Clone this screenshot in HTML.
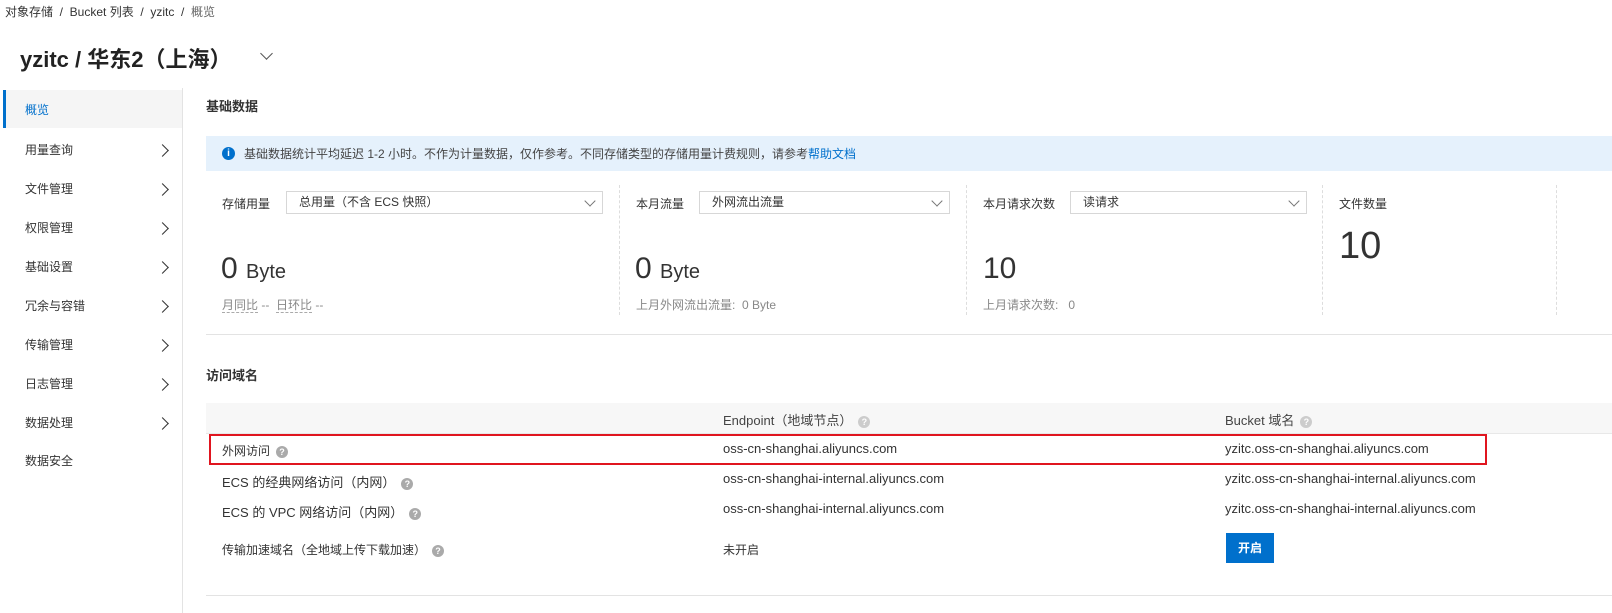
<!DOCTYPE html>
<html><head><meta charset="utf-8"><style>
*{margin:0;padding:0;box-sizing:border-box}
body{width:1612px;height:613px;overflow:hidden;background:#fff;font-family:"Liberation Sans","Noto Sans CJK SC",sans-serif;color:#333;font-size:12px;position:relative}
.a{position:absolute;white-space:nowrap}
.chev{position:absolute;width:9px;height:9px;border-right:1.5px solid #333;border-top:1.5px solid #333;transform:rotate(45deg)}
.sel{position:absolute;height:23px;border:1px solid #d7d7d7;background:#fff;padding-left:12px;line-height:21px;font-size:12px}
.sel:after{content:"";position:absolute;right:8px;top:5px;width:7px;height:7px;border-right:1px solid #777;border-bottom:1px solid #777;transform:rotate(45deg)}
.q{display:inline-block;width:12px;height:12px;border-radius:50%;background:#aaa;color:#fff;font-size:9px;line-height:12px;text-align:center;font-weight:bold;vertical-align:middle;margin-left:6px}
.dash{position:absolute;border-left:1px dashed #ddd;top:185px;height:130px}
</style></head><body>
<div class="a" style="left:5px;top:3px;font-size:12px;color:#333">对象存储 &nbsp;/&nbsp; Bucket 列表 &nbsp;/&nbsp; yzitc &nbsp;/&nbsp; <span style="color:#666">概览</span></div>
<div class="a" style="left:20px;top:42px;font-size:22px;font-weight:bold;color:#222">yzitc / 华东2（上海）</div>
<div class="chev" style="left:262px;top:49px;transform:rotate(135deg);border-color:#555"></div>

<div class="a" style="left:182px;top:88px;width:1px;height:525px;background:#e3e3e3"></div>
<div class="a" style="left:3px;top:90px;width:179px;height:38px;background:#f5f5f5;border-left:3px solid #0070cc"></div>
<div class="a" style="left:25px;top:101px;color:#0070cc">概览</div>
<div class="a" style="left:25px;top:141px">用量查询</div><div class="chev" style="left:158px;top:146px"></div>
<div class="a" style="left:25px;top:180px">文件管理</div><div class="chev" style="left:158px;top:185px"></div>
<div class="a" style="left:25px;top:219px">权限管理</div><div class="chev" style="left:158px;top:224px"></div>
<div class="a" style="left:25px;top:258px">基础设置</div><div class="chev" style="left:158px;top:263px"></div>
<div class="a" style="left:25px;top:297px">冗余与容错</div><div class="chev" style="left:158px;top:302px"></div>
<div class="a" style="left:25px;top:336px">传输管理</div><div class="chev" style="left:158px;top:341px"></div>
<div class="a" style="left:25px;top:375px">日志管理</div><div class="chev" style="left:158px;top:380px"></div>
<div class="a" style="left:25px;top:414px">数据处理</div><div class="chev" style="left:158px;top:419px"></div>
<div class="a" style="left:25px;top:452px">数据安全</div>

<div class="a" style="left:206px;top:96px;font-size:13px;font-weight:bold">基础数据</div>
<div class="a" style="left:206px;top:136px;width:1406px;height:35px;background:#e5f1fc"></div>
<div class="a" style="left:222px;top:147px;width:13px;height:13px;border-radius:50%;background:#0070cc;color:#fff;font-size:10px;font-weight:bold;text-align:center;line-height:13px">i</div>
<div class="a" style="left:244px;top:145px;font-size:12px;color:#444">基础数据统计平均延迟 1-2 小时。不作为计量数据，仅作参考。不同存储类型的存储用量计费规则，请参考<span style="color:#0070cc">帮助文档</span></div>

<div class="a" style="left:222px;top:195px">存储用量</div>
<div class="sel" style="left:286px;top:191px;width:317px">总用量（不含 ECS 快照）</div>
<div class="a" style="left:221px;top:252px;font-size:30px;font-weight:300">0 <span style="font-size:20px">Byte</span></div>
<div class="a" style="left:222px;top:296px;color:#888"><span style="border-bottom:1px dashed #aaa">月同比</span> -- &nbsp;<span style="border-bottom:1px dashed #aaa">日环比</span> --</div>
<div class="dash" style="left:619px"></div>
<div class="a" style="left:636px;top:195px">本月流量</div>
<div class="sel" style="left:699px;top:191px;width:251px">外网流出流量</div>
<div class="a" style="left:635px;top:252px;font-size:30px;font-weight:300">0 <span style="font-size:20px">Byte</span></div>
<div class="a" style="left:636px;top:296px;color:#888">上月外网流出流量: &nbsp;0 Byte</div>
<div class="dash" style="left:966px"></div>
<div class="a" style="left:983px;top:195px">本月请求次数</div>
<div class="sel" style="left:1070px;top:191px;width:237px">读请求</div>
<div class="a" style="left:983px;top:252px;font-size:30px;font-weight:300">10</div>
<div class="a" style="left:983px;top:296px;color:#888">上月请求次数: &nbsp;&nbsp;0</div>
<div class="dash" style="left:1322px"></div>
<div class="a" style="left:1339px;top:195px">文件数量</div>
<div class="a" style="left:1339px;top:225px;font-size:38px;font-weight:300">10</div>
<div class="dash" style="left:1556px"></div>
<div class="a" style="left:206px;top:334px;width:1406px;height:1px;background:#e3e3e3"></div>

<div class="a" style="left:206px;top:365px;font-size:13px;font-weight:bold">访问域名</div>
<div class="a" style="left:206px;top:403px;width:1406px;height:31px;background:#f7f7f7;border-bottom:1px solid #e8e8e8"></div>
<div class="a" style="left:723px;top:410px;color:#444;font-size:13px">Endpoint（地域节点）<span class="q" style="background:#ccc">?</span></div>
<div class="a" style="left:1225px;top:410px;color:#444;font-size:13px">Bucket 域名<span class="q" style="background:#ccc">?</span></div>
<div class="a" style="left:209px;top:434px;width:1278px;height:31px;border:2px solid #e0151f"></div>
<div class="a" style="left:222px;top:442px">外网访问<span class="q">?</span></div>
<div class="a" style="left:723px;top:441px;font-size:13px">oss-cn-shanghai.aliyuncs.com</div>
<div class="a" style="left:1225px;top:441px;font-size:13px">yzitc.oss-cn-shanghai.aliyuncs.com</div>
<div class="a" style="left:222px;top:472px;font-size:13px">ECS 的经典网络访问（内网）<span class="q">?</span></div>
<div class="a" style="left:723px;top:471px;font-size:13px">oss-cn-shanghai-internal.aliyuncs.com</div>
<div class="a" style="left:1225px;top:471px;font-size:13px">yzitc.oss-cn-shanghai-internal.aliyuncs.com</div>
<div class="a" style="left:222px;top:502px;font-size:13px">ECS 的 VPC 网络访问（内网）<span class="q">?</span></div>
<div class="a" style="left:723px;top:501px;font-size:13px">oss-cn-shanghai-internal.aliyuncs.com</div>
<div class="a" style="left:1225px;top:501px;font-size:13px">yzitc.oss-cn-shanghai-internal.aliyuncs.com</div>
<div class="a" style="left:222px;top:541px">传输加速域名（全地域上传下载加速）<span class="q">?</span></div>
<div class="a" style="left:723px;top:541px">未开启</div>
<div class="a" style="left:1226px;top:533px;width:48px;height:30px;background:#0070cc;color:#fff;font-weight:bold;text-align:center;line-height:30px">开启</div>
<div class="a" style="left:206px;top:595px;width:1406px;height:1px;background:#e3e3e3"></div>
</body></html>
